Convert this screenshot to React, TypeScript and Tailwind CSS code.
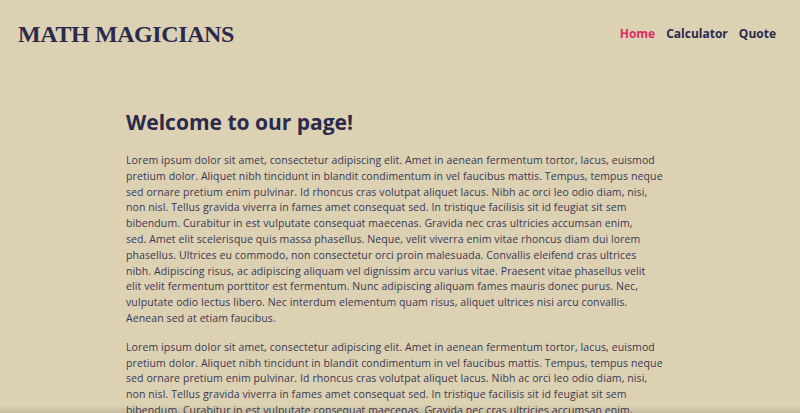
const para = [
  "Lorem ipsum dolor sit amet, consectetur adipiscing elit. Amet in aenean fermentum tortor, lacus, euismod",
  "pretium dolor. Aliquet nibh tincidunt in blandit condimentum in vel faucibus mattis. Tempus, tempus neque",
  "sed ornare pretium enim pulvinar. Id rhoncus cras volutpat aliquet lacus. Nibh ac orci leo odio diam, nisi,",
  "non nisl. Tellus gravida viverra in fames amet consequat sed. In tristique facilisis sit id feugiat sit sem",
  "bibendum. Curabitur in est vulputate consequat maecenas. Gravida nec cras ultricies accumsan enim,",
  "sed. Amet elit scelerisque quis massa phasellus. Neque, velit viverra enim vitae rhoncus diam dui lorem",
  "phasellus. Ultrices eu commodo, non consectetur orci proin malesuada. Convallis eleifend cras ultrices",
  "nibh. Adipiscing risus, ac adipiscing aliquam vel dignissim arcu varius vitae. Praesent vitae phasellus velit",
  "elit velit fermentum porttitor est fermentum. Nunc adipiscing aliquam fames mauris donec purus. Nec,",
  "vulputate odio lectus libero. Nec interdum elementum quam risus, aliquet ultrices nisi arcu convallis.",
  "Aenean sed at etiam faucibus.",
];

const Paragraph = () => (
  <p className="mb-[13px] text-[10.5px] leading-[15.8px] tracking-[0.1px] text-[#3a3852]">
    {para.map((line) => (
      <span key={line} className="block whitespace-nowrap">
        {line}
      </span>
    ))}
  </p>
);

const App = () => {
  return (
    <div className="relative h-[413px] overflow-hidden bg-[#dcd1b3] font-['Open_Sans',sans-serif] text-[#2b2a4c]">
      <header className="flex items-center justify-between px-[18px] pt-[18px]">
        <h1 className="font-['Liberation_Serif',serif] text-[24px] font-bold leading-8 tracking-[-0.4px]">
          MATH MAGICIANS
        </h1>
        <nav className="flex gap-[11px] pr-[6px] text-[12px] font-bold">
          <a className="text-[#df2a63]">Home</a>
          <a>Calculator</a>
          <a>Quote</a>
        </nav>
      </header>
      <main className="mx-auto mt-[58px] w-[548px]">
        <h2 className="mb-[17px] text-[21px] font-bold leading-7">Welcome to our page!</h2>
        <Paragraph />
        <Paragraph />
      </main>
      <div className="absolute bottom-0 left-0 h-[8px] w-full bg-gradient-to-b from-transparent to-black/10" />
    </div>
  );
};

export default App;
